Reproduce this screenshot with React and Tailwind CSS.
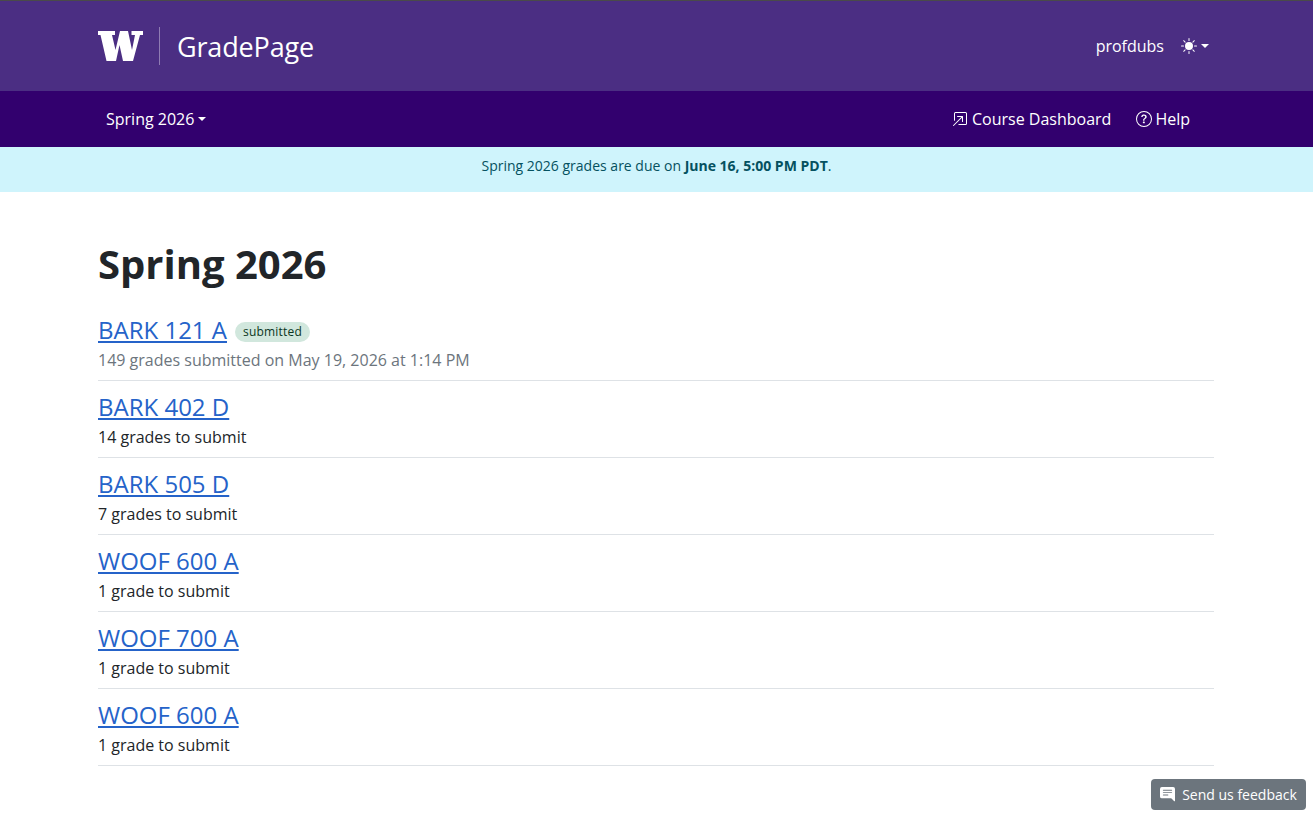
const courses = [
  { name: "BARK 121 A", note: "149 grades submitted on May 19, 2026 at 1:14 PM", submitted: true },
  { name: "BARK 402 D", note: "14 grades to submit" },
  { name: "BARK 505 D", note: "7 grades to submit" },
  { name: "WOOF 600 A", note: "1 grade to submit" },
  { name: "WOOF 700 A", note: "1 grade to submit" },
  { name: "WOOF 600 A", note: "1 grade to submit" },
];

const Caret = () => (
  <span className="ml-[4px] inline-block w-0 h-0 border-x-[4px] border-x-transparent border-t-[4px] border-t-white align-middle" />
);

const UwLogo = () => (
  <svg width="45" height="30" viewBox="0 0 45 30" fill="white">
    <path d="M0 0H17V4H14L17.5 19L22 0H30L34 19L37 4H33.5V0H45V4H42L35 30H25L21.5 14L18 30H8.5L2.5 4H0Z" />
  </svg>
);

const SunIcon = () => (
  <svg width="16" height="16" viewBox="0 0 16 16" fill="white">
    <path d="M12 8a4 4 0 1 1-8 0 4 4 0 0 1 8 0M8 0a.5.5 0 0 1 .5.5v2a.5.5 0 0 1-1 0v-2A.5.5 0 0 1 8 0m0 13a.5.5 0 0 1 .5.5v2a.5.5 0 0 1-1 0v-2A.5.5 0 0 1 8 13m8-5a.5.5 0 0 1-.5.5h-2a.5.5 0 0 1 0-1h2a.5.5 0 0 1 .5.5M3 8a.5.5 0 0 1-.5.5h-2a.5.5 0 0 1 0-1h2A.5.5 0 0 1 3 8m10.657-5.657a.5.5 0 0 1 0 .707l-1.414 1.415a.5.5 0 1 1-.707-.708l1.414-1.414a.5.5 0 0 1 .707 0m-9.193 9.193a.5.5 0 0 1 0 .707L3.05 13.657a.5.5 0 0 1-.707-.707l1.414-1.414a.5.5 0 0 1 .707 0m9.193 2.121a.5.5 0 0 1-.707 0l-1.414-1.414a.5.5 0 0 1 .707-.707l1.414 1.414a.5.5 0 0 1 0 .707M4.464 4.465a.5.5 0 0 1-.707 0L2.343 3.05a.5.5 0 1 1 .707-.707l1.414 1.414a.5.5 0 0 1 0 .708" />
  </svg>
);

const DashboardIcon = () => (
  <svg width="16" height="16" viewBox="0 0 16 16" fill="white">
    <path fillRule="evenodd" d="M6.364 13.5a.5.5 0 0 0 .5.5H13.5a1.5 1.5 0 0 0 1.5-1.5v-10A1.5 1.5 0 0 0 13.5 1h-10A1.5 1.5 0 0 0 2 2.5v6.636a.5.5 0 1 0 1 0V2.5a.5.5 0 0 1 .5-.5h10a.5.5 0 0 1 .5.5v10a.5.5 0 0 1-.5.5H6.864a.5.5 0 0 0-.5.5" />
    <path fillRule="evenodd" d="M11 5.5a.5.5 0 0 0-.5-.5h-5a.5.5 0 0 0 0 1h3.793l-8.147 8.146a.5.5 0 0 0 .708.708L10 6.707V10.5a.5.5 0 0 0 1 0z" />
  </svg>
);

const HelpIcon = () => (
  <svg width="16" height="16" viewBox="0 0 16 16" fill="white">
    <path d="M8 15A7 7 0 1 1 8 1a7 7 0 0 1 0 14m0 1A8 8 0 1 0 8 0a8 8 0 0 0 0 16" />
    <path d="M5.255 5.786a.237.237 0 0 0 .241.247h.825c.138 0 .248-.113.266-.25.09-.656.54-1.134 1.342-1.134.686 0 1.314.343 1.314 1.168 0 .635-.374.927-.965 1.371-.673.489-1.206 1.06-1.168 1.987l.003.217a.25.25 0 0 0 .25.246h.811a.25.25 0 0 0 .25-.25v-.105c0-.718.273-.927 1.01-1.486.609-.463 1.244-.977 1.244-2.056 0-1.511-1.276-2.241-2.673-2.241-1.267 0-2.655.59-2.75 2.286m1.557 5.763c0 .533.425.927 1.01.927.609 0 1.028-.394 1.028-.927 0-.552-.42-.94-1.029-.94-.584 0-1.009.388-1.009.94" />
  </svg>
);

const FeedbackIcon = () => (
  <svg width="15" height="15" viewBox="0 0 16 16" fill="white">
    <path fillRule="evenodd" d="M16 2a2 2 0 0 0-2-2H2a2 2 0 0 0-2 2v8a2 2 0 0 0 2 2h9.586a1 1 0 0 1 .707.293l2.853 2.853a.5.5 0 0 0 .854-.353zM3.5 3h9a.5.5 0 0 1 0 1h-9a.5.5 0 0 1 0-1m0 2.5h9a.5.5 0 0 1 0 1h-9a.5.5 0 0 1 0-1m0 2.5h5a.5.5 0 0 1 0 1h-5a.5.5 0 0 1 0-1" />
  </svg>
);

const App = () => {
  return (
    <div className="min-h-[817px] bg-white font-['Open_Sans',sans-serif] text-[#212529]">
      {/* Top bar */}
      <header className="h-[91px] bg-[#4b2e83] border-t border-t-[#4a4a4a] px-[98px] flex items-center justify-between">
        <div className="flex items-center">
          <UwLogo />
          <div className="w-px h-[38px] bg-[#8f7bb3] ml-[16px] mr-[17px]" />
          <span className="text-[27px] leading-none font-medium text-white tracking-[-0.15px]">GradePage</span>
        </div>
        <div className="flex items-center pr-[6px] text-white">
          <span className="text-[16px]">profdubs</span>
          <span className="ml-[17px] flex items-center">
            <SunIcon />
            <Caret />
          </span>
        </div>
      </header>

      {/* Term nav */}
      <nav className="h-[56px] bg-[#32006e] pl-[106px] pr-[123px] flex items-center justify-between text-white text-[16px]">
        <span className="flex items-center">
          Spring 2026
          <Caret />
        </span>
        <div className="flex items-center gap-[25px]">
          <span className="flex items-center gap-[4px]">
            <DashboardIcon />
            Course Dashboard
          </span>
          <span className="flex items-center gap-[3px]">
            <HelpIcon />
            Help
          </span>
        </div>
      </nav>

      {/* Due date banner */}
      <div className="h-[45px] bg-[#cff4fc] text-[#055160] text-[14px] flex items-center justify-center pb-[9px]">
        <span>
          Spring 2026 grades are due on <b className="font-bold">June 16, 5:00 PM PDT</b>.
        </span>
      </div>

      <main className="pl-[98px] pr-[99px] pt-[44px]">
        <h1 className="text-[40px] leading-[56px] font-bold mb-[12px]">Spring 2026</h1>
        <ul>
          {courses.map((course, i) => (
            <li key={i} className="h-[77px] border-b border-b-[#dee2e6] pt-[10px]">
              <div className="flex items-center h-[32px]">
                <a href="#" className="text-[24px] leading-[32px] text-[#2563c9] underline">
                  {course.name}
                </a>
                {course.submitted && (
                  <span className="ml-[8px] mt-[3px] h-[20px] px-[8px] rounded-full bg-[#d1e7dd] text-[#0a3622] text-[12px] font-medium tracking-[0.2px] leading-[20px]">
                    submitted
                  </span>
                )}
              </div>
              <div className={`text-[16px] leading-[24px] mt-[2px] ${course.submitted ? "text-[#6c757d]" : "text-[#212529]"}`}>
                {course.note}
              </div>
            </li>
          ))}
        </ul>
      </main>

      {/* Feedback tab */}
      <button className="fixed right-[7px] bottom-[7px] h-[31px] w-[155px] rounded bg-[#6c757d] text-white text-[14px] flex items-center justify-center gap-[7px]">
        <FeedbackIcon />
        Send us feedback
      </button>
    </div>
  );
};

export default App;
